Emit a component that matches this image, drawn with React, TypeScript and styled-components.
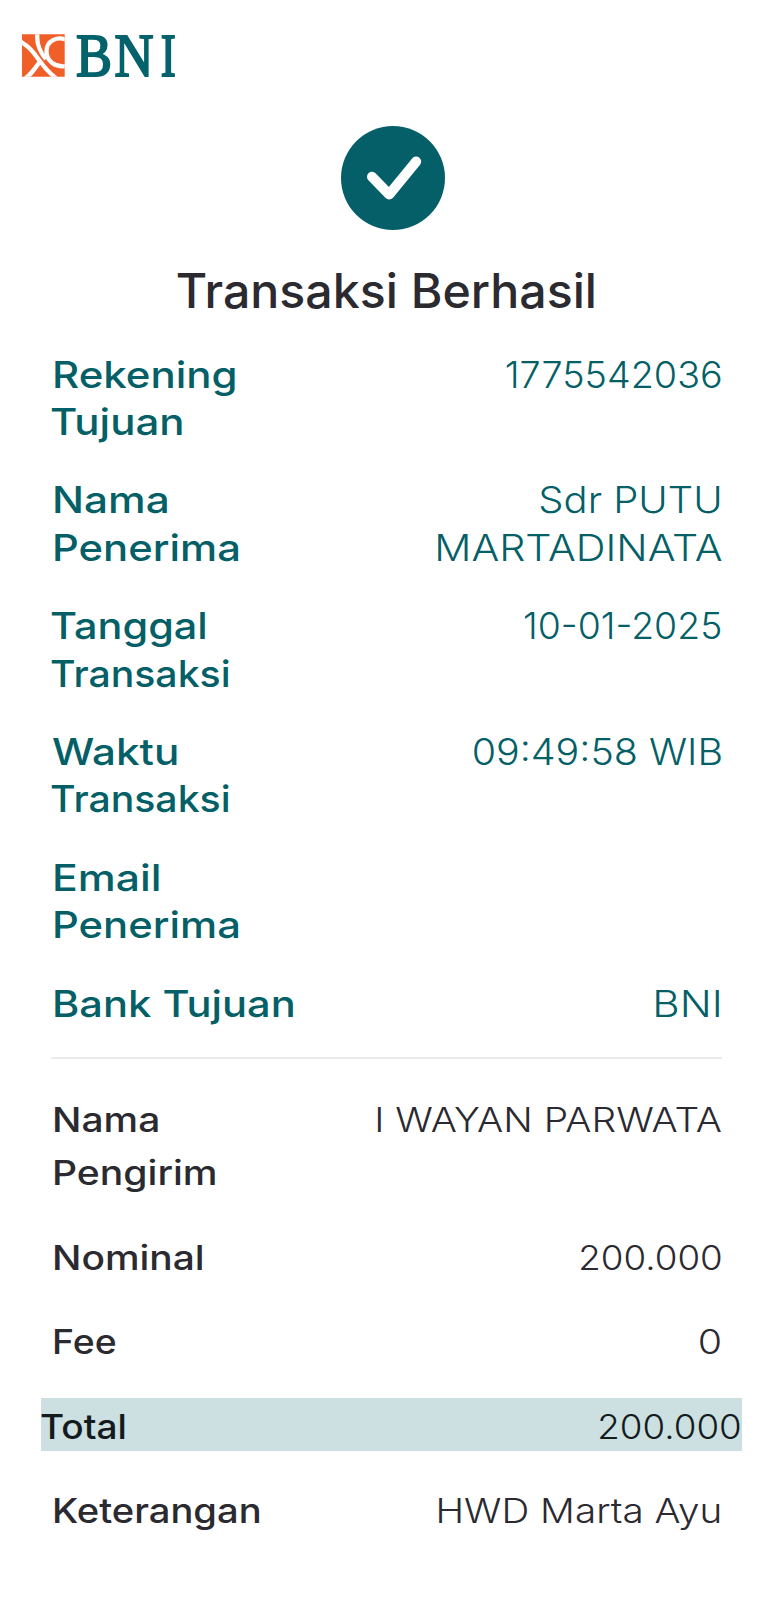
import React from 'react';
import styled, { createGlobalStyle } from 'styled-components';

const GlobalStyle = createGlobalStyle`
  * { box-sizing: border-box; }
  body {
    margin: 0;
    background: #fff;
    font-family: Inter, "Open Sans", sans-serif;
    color: #2b2a30;
  }
`;

const Page = styled.main`
  display: flex;
  flex-direction: column;
  width: 773px;
  height: 1600px;
  overflow: hidden;
  background: #fff;
`;

const Header = styled.header`
  display: flex;
  height: 126px;
  padding: 10px 0 0 20px;
`;

const Status = styled.section`
  display: flex;
  flex-direction: column;
  align-items: center;
  height: 224.5px;
`;

const StatusIcon = styled.svg`
  display: block;
  width: 104px;
  height: 104px;
  margin-left: 13px;
`;

const Title = styled.h1`
  margin: 32px 0 0;
  font-size: 47.5px;
  font-weight: 530;
  line-height: 58px;
  white-space: nowrap;
  transform: scaleX(1.016);
`;

const Details = styled.dl<{ $tone: 'brand' | 'neutral' }>`
  display: flex;
  flex-direction: column;
  gap: ${p => (p.$tone === 'brand' ? 31.5 : 31.6)}px;
  margin: 0 50.5px 0 50px;
  color: ${p => (p.$tone === 'brand' ? '#045f67' : '#2b2a30')};
  font-size: ${p => (p.$tone === 'brand' ? 37 : 34)}px;
  line-height: ${p => (p.$tone === 'brand' ? 47.2 : 53)}px;
`;

const Row = styled.div<{ $highlight?: boolean }>`
  display: flex;
  justify-content: space-between;
  ${p =>
    p.$highlight &&
    `
    height: 53px;
    margin: -1.4px -19.5px 1.4px -8.6px;
    padding-top: 1.4px;
    background: #ccdfe1;
    color: #141b1d;
  `}
`;

const Label = styled.dt`
  font-weight: 530;
`;

const Value = styled.dd`
  margin: 0;
  font-weight: 365;
  text-align: right;
`;

const LabelLine = styled.span<{ $stretch: number; $indent: number }>`
  display: block;
  width: max-content;
  margin-left: ${p => p.$indent}px;
  white-space: nowrap;
  transform: scaleX(${p => p.$stretch});
  transform-origin: left;
`;

const ValueLine = styled.span<{ $stretch: number }>`
  display: block;
  width: max-content;
  margin-left: auto;
  white-space: nowrap;
  transform: scaleX(${p => p.$stretch});
  transform-origin: right;
`;

const Divider = styled.hr`
  width: 671px;
  height: 2px;
  margin: 30px 0 33.7px 51px;
  border: 0;
  background: #ebebec;
`;

type Line = [text: string, stretch: number, indent?: number];
interface Entry {
  label: Line[];
  value: Line[];
  highlight?: boolean;
}

const recipient: Entry[] = [
  { label: [['Rekening', 1.135, 2], ['Tujuan', 1.135, 0.3]], value: [['1775542036', 1.02]] },
  { label: [['Nama', 1.145, 2], ['Penerima', 1.13, 2]], value: [['Sdr PUTU', 1.08], ['MARTADINATA', 1.115]] },
  { label: [['Tanggal', 1.12, 0.3], ['Transaksi', 1.06, 0.3]], value: [['10-01-2025', 1.01]] },
  { label: [['Waktu', 1.14, 1.5], ['Transaksi', 1.06, 0.3]], value: [['09:49:58 WIB', 1.065]] },
  { label: [['Email', 1.155, 2], ['Penerima', 1.13, 2]], value: [] },
  { label: [['Bank Tujuan', 1.125, 2]], value: [['BNI', 1.14]] },
];

const payment: Entry[] = [
  { label: [['Nama', 1.145, 2], ['Pengirim', 1.15, 2]], value: [['I WAYAN PARWATA', 1.144]] },
  { label: [['Nominal', 1.145, 2]], value: [['200.000', 1.08]] },
  { label: [['Fee', 1.1, 2]], value: [['0', 1.16]] },
  { label: [['Total', 1.09, -1]], value: [['200.000', 1.08]], highlight: true },
  { label: [['Keterangan', 1.122, 2]], value: [['HWD Marta Ayu', 1.137]] },
];

const EntryRow = ({ entry }: { entry: Entry }) => (
  <Row $highlight={entry.highlight}>
    <Label>
      {entry.label.map(([text, stretch, indent = 0]) => (
        <LabelLine key={text} $stretch={stretch} $indent={indent}>{text}</LabelLine>
      ))}
    </Label>
    <Value>
      {entry.value.map(([text, stretch]) => (
        <ValueLine key={text} $stretch={stretch}>{text}</ValueLine>
      ))}
    </Value>
  </Row>
);

const Logo = () => (
  <svg width="170" height="92" viewBox="20 10 170 92" role="img" aria-label="BNI">
    <clipPath id="mark"><rect x="22" y="34.3" width="42.7" height="42.5" /></clipPath>
    <g clipPath="url(#mark)">
      <rect x="22" y="34" width="43" height="43" fill="#f15f28" />
      <g fill="none" stroke="#fff" strokeWidth="4.3">
        <path d="M19.5 41 C29 46 34 53 39 60 S49 73 57 79" />
        <path d="M23 80 C30 76 34 70 40 61.5" />
        <path d="M37.5 33 C36 44 40 52 46 59" />
        <path d="M67 40 C57 35.5 46.5 41 46.5 51 C46.5 61 55 68 67 66" />
      </g>
    </g>
    <g fontFamily="'Liberation Serif', serif" fontSize="62" fill="#03626b" stroke="#03626b" strokeWidth="2">
      <text x="76" y="76" textLength="36" lengthAdjust="spacingAndGlyphs">B</text>
      <text x="114.5" y="76" textLength="39" lengthAdjust="spacingAndGlyphs">N</text>
      <text x="160.8" y="76" textLength="15" lengthAdjust="spacingAndGlyphs">I</text>
    </g>
  </svg>
);

export default function App() {
  return (
    <Page>
      <GlobalStyle />
      <Header>
        <Logo />
      </Header>
      <Status>
        <StatusIcon viewBox="0 0 104 104">
          <circle cx="52" cy="52" r="52" fill="#045f69" />
          <path d="M31 50.8 L48.2 68.5 L75.2 35.5" fill="none" stroke="#fff" strokeWidth="10" strokeLinecap="round" strokeLinejoin="round" />
        </StatusIcon>
        <Title>Transaksi Berhasil</Title>
      </Status>
      <Details $tone="brand">
        {recipient.map((entry, i) => <EntryRow key={i} entry={entry} />)}
      </Details>
      <Divider />
      <Details $tone="neutral">
        {payment.map((entry, i) => <EntryRow key={i} entry={entry} />)}
      </Details>
    </Page>
  );
}
